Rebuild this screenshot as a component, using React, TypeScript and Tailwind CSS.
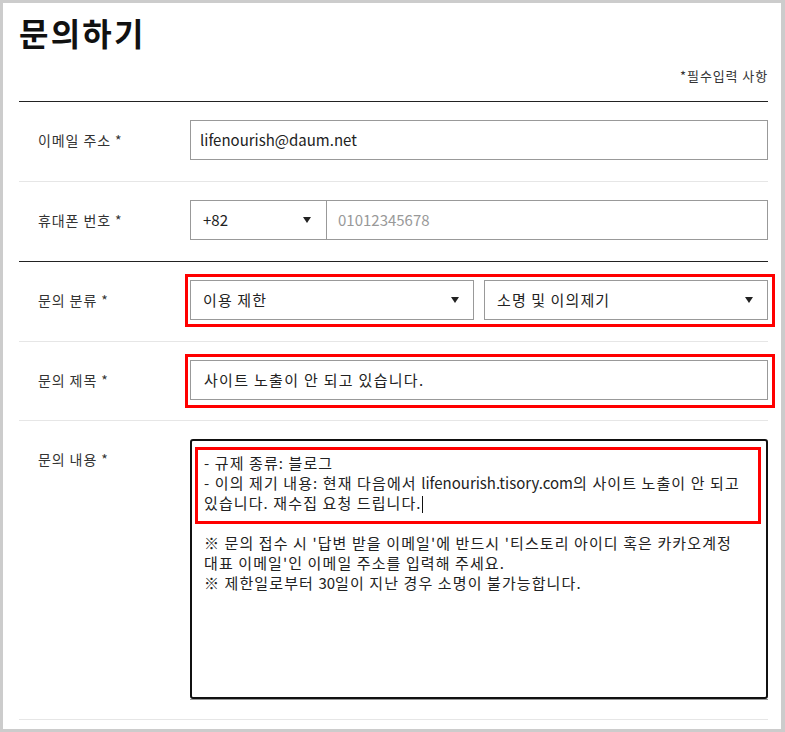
import React from "react";

const font = { fontFamily: '"Noto Sans CJK KR", "Noto Sans", sans-serif' };

function Tri() {
  return (
    <svg width="8" height="6" viewBox="0 0 8 6" className="shrink-0">
      <polygon points="0,0 8,0 4,6" fill="#222" />
    </svg>
  );
}

function L({ children }: { children: React.ReactNode }) {
  return <span className="tracking-normal">{children}</span>;
}

function Row({ label, children, bottom = "light" }: { label: string; children: React.ReactNode; bottom?: "light" | "dark" }) {
  return (
    <div
      className={
        "flex pt-[18px] pb-[21px] " +
        (bottom === "dark" ? "border-b border-[#222]" : "border-b border-[#e6e6e6]")
      }
    >
      <div className="w-[171px] shrink-0 pl-[19px] h-[40px] flex items-center text-[14px] tracking-[0.9px] text-[#333]">
        {label}
      </div>
      <div className="flex-1 min-w-0">{children}</div>
    </div>
  );
}

export default function App() {
  return (
    <div className="w-[785px] h-[732px] bg-[#cccccc] pt-[3px] pl-[3px] pr-[4px] pb-[3px]" style={font}>
      <div className="bg-white h-full pl-[16px] pr-[13px] overflow-hidden">
        <div className="pt-[9px] text-[32px] leading-[40px] font-bold tracking-[2.2px] text-[#111]">문의하기</div>
        <div className="mt-[14px] pb-[15px] text-right text-[13px] leading-[20px] tracking-[0.9px] text-[#333] border-b border-[#222]">
          *필수입력 사항
        </div>

        <Row label="이메일 주소 *">
          <div className="h-[40px] border border-[#999] flex items-center pl-[9px] text-[15px] text-[#222]">
            lifenourish@daum.net
          </div>
        </Row>

        <Row label="휴대폰 번호 *" bottom="dark">
          <div className="h-[40px] flex">
            <div className="w-[137px] border border-[#999] flex items-center justify-between pl-[12px] pr-[15px] text-[15px] text-[#222]">
              <span>+82</span>
              <Tri />
            </div>
            <div className="flex-1 border border-l-0 border-[#999] flex items-center pl-[11px] text-[15px] text-[#999]">
              01012345678
            </div>
          </div>
        </Row>

        <Row label="문의 분류 *">
          <div className="relative">
            <div className="flex gap-[10px] h-[40px]">
              <div className="w-[284px] border border-[#999] flex items-center justify-between pl-[12px] pr-[14px] text-[15px] tracking-[1.1px] text-[#222]">
                <span>이용 제한</span>
                <Tri />
              </div>
              <div className="w-[284px] border border-[#999] flex items-center justify-between pl-[12px] pr-[14px] text-[15px] tracking-[1.1px] text-[#222]">
                <span>소명 및 이의제기</span>
                <Tri />
              </div>
            </div>
            <div className="absolute -left-[5px] -top-[6px] -right-[7px] -bottom-[7px] border-[3px] border-[#ff0000] pointer-events-none" />
          </div>
        </Row>

        <div className="flex pt-[18px] pb-[20px] border-b border-[#e6e6e6]">
          <div className="w-[171px] shrink-0 pl-[19px] h-[40px] flex items-center text-[14px] tracking-[0.9px] text-[#333]">문의 제목 *</div>
          <div className="flex-1 min-w-0 relative">
            <div className="h-[40px] border border-[#999] flex items-center pl-[13px] text-[15px] tracking-[1.3px] text-[#222]">
              사이트 노출이 안 되고 있습니다.
            </div>
            <div className="absolute -left-[5px] -top-[6px] -right-[7px] -bottom-[8px] border-[3px] border-[#ff0000] pointer-events-none" />
          </div>
        </div>

        <div className="flex pt-[18px] pb-[19px] border-b border-[#e6e6e6]">
          <div className="w-[171px] shrink-0 pl-[19px] h-[40px] flex items-center text-[14px] tracking-[0.9px] text-[#333]">문의 내용 *</div>
          <div className="flex-1 min-w-0 border-b border-[#999]">
            <div className="relative h-[260px] border-2 border-[#111] rounded-[3px] pl-[12px] pt-[12px] text-[15px] leading-[20px] tracking-[1.1px] text-[#222] whitespace-nowrap">
              <div>- 규제 종류: 블로그</div>
              <div>
                - 이의 제기 내용: 현재 다음에서 <L>lifenourish.tisory.com</L>의 사이트 노출이 안 되고
              </div>
              <div>
                있습니다. 재수집 요청 드립니다.<span className="inline-block w-px h-[17px] bg-[#111] align-middle" />
              </div>
              <div className="h-[20px]" />
              <div>※ 문의 접수 시 '답변 받을 이메일'에 반드시 '티스토리 아이디 혹은 카카오계정</div>
              <div>대표 이메일'인 이메일 주소를 입력해 주세요.</div>
              <div>※ 제한일로부터 <L>30</L>일이 지난 경우 소명이 불가능합니다.</div>
              <div className="absolute left-[3px] top-[6px] w-[566px] h-[77px] border-[3px] border-[#ff0000] pointer-events-none" />
            </div>
          </div>
        </div>
      </div>
    </div>
  );
}
